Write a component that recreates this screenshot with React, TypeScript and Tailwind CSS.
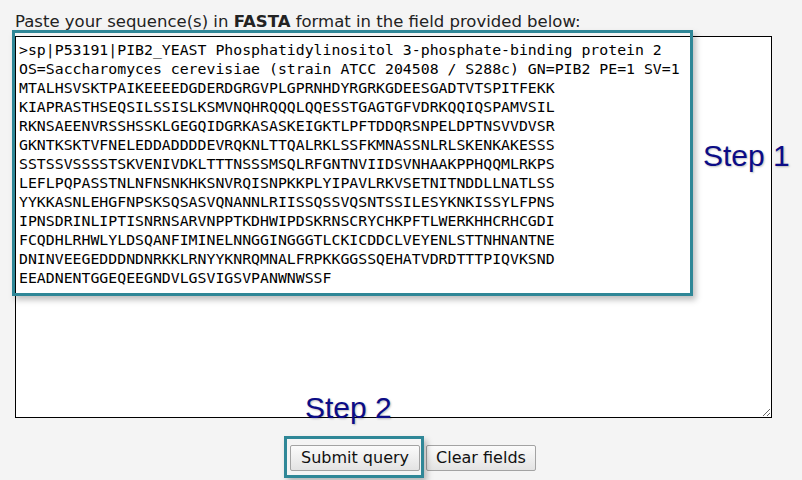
import { useState } from "react";

const SAMPLE = `>sp|P53191|PIB2_YEAST Phosphatidylinositol 3-phosphate-binding protein 2
OS=Saccharomyces cerevisiae (strain ATCC 204508 / S288c) GN=PIB2 PE=1 SV=1
MTALHSVSKTPAIKEEEEDGDERDGRGVPLGPRNHDYRGRKGDEESGADTVTSPITFEKK
KIAPRASTHSEQSILSSISLKSMVNQHRQQQLQQESSTGAGTGFVDRKQQIQSPAMVSIL
RKNSAEENVRSSHSSKLGEGQIDGRKASASKEIGKTLPFTDDQRSNPELDPTNSVVDVSR
GKNTKSKTVFNELEDDADDDDEVRQKNLTTQALRKLSSFKMNASSNLRLSKENKAKESSS
SSTSSVSSSSTSKVENIVDKLTTTNSSSMSQLRFGNTNVIIDSVNHAAKPPHQQMLRKPS
LEFLPQPASSTNLNFNSNKHKSNVRQISNPKKPLYIPAVLRKVSETNITNDDLLNATLSS
YYKKASNLEHGFNPSKSQSASVQNANNLRIISSQSSVQSNTSSILESYKNKISSYLFPNS
IPNSDRINLIPTISNRNSARVNPPTKDHWIPDSKRNSCRYCHKPFTLWERKHHCRHCGDI
FCQDHLRHWLYLDSQANFIMINELNNGGINGGGTLCKICDDCLVEYENLSTTNHNANTNE
DNINVEEGEDDDNDNRKKLRNYYKNRQMNALFRPKKGGSSQEHATVDRDTTTPIQVKSND
EEADNENTGGEQEEGNDVLGSVIGSVPANWNWSSF`;

export default function App() {
  const [seq, setSeq] = useState(SAMPLE);

  return (
    <div className="relative min-h-screen bg-[#f4f4f4] px-[15px] pt-[12px] font-['DejaVu_Sans',sans-serif] text-[#222]">
      <p className="whitespace-nowrap text-[16.5px] leading-[20px]">
        Paste your sequence(s) in <b>FASTA</b> format in the field provided below:
      </p>

      {/* Sequence field */}
      <div className="relative mt-[4px] w-[757px]">
        <textarea
          value={seq}
          onChange={(e) => setSeq(e.target.value)}
          spellCheck={false}
          wrap="off"
          className="block h-[382px] w-[757px] resize border border-black bg-white px-[3px] pt-[3px] font-['DejaVu_Sans_Mono',monospace] text-[14.83px] leading-[19px] text-black outline-none"
        />

        {/* Step 1 annotation */}
        <div className="pointer-events-none absolute left-[-3px] top-[-6px] h-[266px] w-[681px] border-[3px] border-[#2f8797] shadow-[3px_4px_6px_rgba(0,0,0,0.25)]" />
        <span className="pointer-events-none absolute left-[688px] top-[102px] whitespace-nowrap font-['Liberation_Sans',Arial,sans-serif] text-[30px] leading-[36px] text-[#0c0c86] [text-shadow:1px_1px_2px_rgba(0,0,0,0.25)]">
          Step 1
        </span>
        <span className="pointer-events-none absolute left-[290px] top-[354px] whitespace-nowrap font-['Liberation_Sans',Arial,sans-serif] text-[30px] leading-[36px] text-[#0c0c86] [text-shadow:1px_1px_2px_rgba(0,0,0,0.25)]">
          Step 2
        </span>
      </div>

      {/* Buttons */}
      <div className="relative mt-[27px] flex gap-[6px] pl-[275px]">
        <button
          type="button"
          className="h-[26px] w-[130px] rounded-[2px] border border-[#a3a3a3] bg-gradient-to-b from-[#fbfbfb] to-[#e3e3e3] text-[16px] leading-none text-[#111]"
        >
          Submit query
        </button>
        <button
          type="button"
          onClick={() => setSeq("")}
          className="h-[26px] w-[110px] rounded-[2px] border border-[#a3a3a3] bg-gradient-to-b from-[#fbfbfb] to-[#e3e3e3] text-[16px] leading-none text-[#111]"
        >
          Clear fields
        </button>
        <div className="pointer-events-none absolute left-[269px] top-[-9px] h-[42px] w-[140px] border-[3px] border-[#2f8797] shadow-[3px_4px_6px_rgba(0,0,0,0.25)]" />
      </div>
    </div>
  );
}
